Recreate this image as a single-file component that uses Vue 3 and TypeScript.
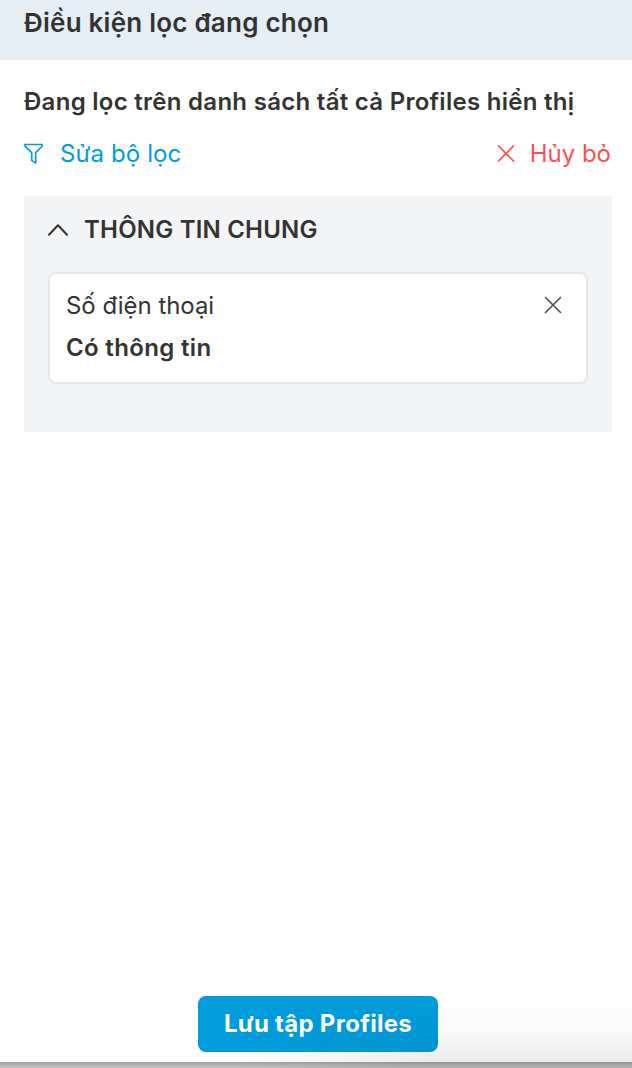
<script setup lang="ts">
import { ref } from 'vue'

interface Condition {
  label: string
  value: string
}

const open = ref(true)
const conditions = ref<Condition[]>([{ label: 'Số điện thoại', value: 'Có thông tin' }])

function remove(index: number) {
  conditions.value.splice(index, 1)
}
</script>

<template>
  <div class="panel">
    <header class="header">Điều kiện lọc đang chọn</header>
    <main class="body">
      <div class="summary">Đang lọc trên danh sách tất cả Profiles hiển thị</div>
      <div class="actions">
        <button class="link edit">
          <svg width="20" height="22" viewBox="0 0 20 22" fill="none" stroke="currentColor" stroke-width="1.6" stroke-linejoin="round">
            <path d="M.9 1.5H18.1V3.2L11.7 9.6V20L7.7 17.3V9.6L.9 3.2Z" />
          </svg>
          <span>Sửa bộ lọc</span>
        </button>
        <button class="link cancel">
          <svg width="18" height="18" viewBox="0 0 18 18" fill="none" stroke="currentColor" stroke-width="1.7" stroke-linecap="round">
            <path d="M1.5 1L16.5 16M16.5 1L1.5 16" />
          </svg>
          <span>Hủy bỏ</span>
        </button>
      </div>
      <section class="group">
        <button class="group-head" @click="open = !open">
          <svg width="20" height="12" viewBox="0 0 20 12" fill="none" stroke="currentColor" stroke-width="2" stroke-linecap="round" stroke-linejoin="round">
            <path d="M1 10.7L10 1.2L19 10.7" />
          </svg>
          <span>THÔNG TIN CHUNG</span>
        </button>
        <template v-if="open">
          <div v-for="(item, i) in conditions" :key="item.label" class="card">
            <div class="card-copy">
              <div class="label">{{ item.label }}</div>
              <div class="value">{{ item.value }}</div>
            </div>
            <button class="remove" @click="remove(i)">
              <svg width="18" height="18" viewBox="0 0 18 18" fill="none" stroke="currentColor" stroke-width="1.7" stroke-linecap="round">
                <path d="M1.5 1.5L16.5 16.5M16.5 1.5L1.5 16.5" />
              </svg>
            </button>
          </div>
        </template>
      </section>
    </main>
    <footer class="footer">
      <button class="save">Lưu tập Profiles</button>
    </footer>
    <div class="edge"></div>
    <div class="shade"></div>
  </div>
</template>

<style>
html,
body {
  margin: 0;
  background: #fff;
}
</style>

<style scoped>
.panel {
  position: relative;
  display: flex;
  flex-direction: column;
  width: 632px;
  height: 1068px;
  overflow: hidden;
  background: #fff;
  color: #333;
  font-family: Inter, "Liberation Sans", sans-serif;
  font-size: 24px;
  line-height: 36px;
  white-space: nowrap;
}
button {
  margin: 0;
  padding: 0;
  border: 0;
  background: none;
  color: inherit;
  font: inherit;
  letter-spacing: inherit;
  cursor: pointer;
}
svg {
  display: block;
  flex: none;
}
.header {
  box-sizing: border-box;
  height: 60px;
  padding: 5px 24px 0;
  background: #e5edf5;
  font-size: 26px;
  font-weight: 600;
  letter-spacing: 0.23px;
}
.body {
  flex: 1;
  padding: 24px 20px 0 24px;
}
.summary {
  font-weight: 600;
  letter-spacing: 0.28px;
}
.actions {
  display: flex;
  justify-content: space-between;
  height: 36px;
  margin-top: 16px;
}
.link {
  display: flex;
  align-items: center;
}
.edit {
  gap: 16px;
  color: #009cdb;
  letter-spacing: 0.12px;
}
.cancel {
  gap: 15px;
  margin-right: 1px;
  color: #ff5050;
}
.group {
  box-sizing: border-box;
  height: 236px;
  margin-top: 24px;
  padding: 16px 24px;
  background: #f3f4f6;
}
.group-head {
  display: flex;
  align-items: center;
  gap: 16px;
  height: 36px;
  font-weight: 600;
  letter-spacing: 0.2px;
}
.card {
  box-sizing: border-box;
  display: flex;
  justify-content: space-between;
  height: 112px;
  margin-top: 24px;
  padding: 13px 24px 0 16px;
  border: 2px solid #e5e7ed;
  border-radius: 8px;
  background: #fff;
}
.card-copy {
  padding-top: 1px;
}
.label {
  letter-spacing: -0.05px;
}
.value {
  margin-top: 6px;
  font-weight: 600;
  letter-spacing: 0.34px;
}
.remove {
  height: 36px;
  color: #515253;
}
.footer {
  display: flex;
  justify-content: center;
  padding: 0 0 10px 4px;
}
.save {
  width: 240px;
  height: 56px;
  border-radius: 8px;
  background: #009cdb;
  color: #fff;
  font-weight: 700;
  letter-spacing: 0.28px;
}
.edge {
  height: 6px;
  background: linear-gradient(#a0a0a0, #bebebe 70%);
}
.shade {
  position: absolute;
  right: 0;
  bottom: 0;
  width: 400px;
  height: 72px;
  pointer-events: none;
  background: linear-gradient(transparent, rgba(0, 0, 0, 0.025) 50%, rgba(0, 0, 0, 0.09));
  mask-image: linear-gradient(to right, transparent, #000 50%);
}
</style>
